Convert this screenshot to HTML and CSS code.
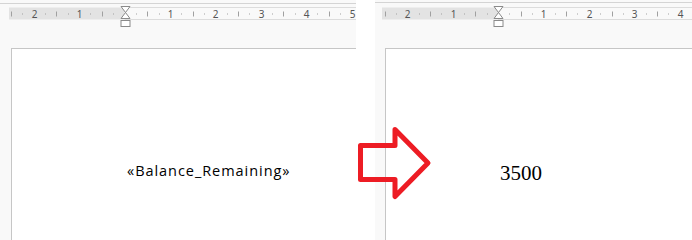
FILE: index.html
```html
<!DOCTYPE html>
<html lang="en">
<head>
  <meta charset="UTF-8">
  <title>Mail merge field</title>
  <link rel="stylesheet" href="styles.css">
</head>
<body>
  <div class="screen">
    <div class="panel panel-left">
      <svg class="ruler" id="rulerLeft" width="356" height="48" data-origin="124.5" data-top="3.5" data-band="9"></svg>
      <div class="page page-left">
        <p class="field">«Balance_Remaining»</p>
      </div>
    </div>

    <div class="gap"></div>

    <div class="panel panel-right">
      <svg class="ruler" id="rulerRight" width="317" height="48" data-origin="123" data-top="2.5" data-band="7"></svg>
      <div class="page page-right">
        <p class="value">3500</p>
      </div>
    </div>

    <svg class="arrow" width="80" height="80" viewBox="355 124 80 80">
      <polygon points="360.5,145.5 395,145.5 395,129.5 428,163 395,196.5 395,179.5 360.5,179.5" />
    </svg>
  </div>

  <script>
    // rulers: one unit = 45.4px, ticks every quarter
    const NS = 'http://www.w3.org/2000/svg';
    const UNIT = 45.4;

    function el(name, attrs, text) {
      const node = document.createElementNS(NS, name);
      for (const k in attrs) node.setAttribute(k, attrs[k]);
      if (text) node.textContent = text;
      return node;
    }

    function drawRuler(svg) {
      const w = +svg.getAttribute('width');
      const origin = +svg.dataset.origin;
      const top = +svg.dataset.top;
      const band = +svg.dataset.band;

      svg.appendChild(el('line', { x1: 0, y1: top, x2: w, y2: top, class: 'rule-top' }));
      svg.appendChild(el('rect', { x: band, y: 7.5, width: origin - band, height: 12, class: 'band' }));
      svg.appendChild(el('line', { x1: origin, y1: 7.5, x2: w, y2: 7.5, class: 'band-edge' }));
      svg.appendChild(el('line', { x1: origin, y1: 19.5, x2: w, y2: 19.5, class: 'band-edge' }));

      for (let k = -12; k <= 24; k++) {
        const x = Math.round(origin + k * UNIT / 4) + 0.5;
        if (x < band + 1 || x > w - 2) continue;
        if (k === 0) continue;
        if (k % 4 === 0) {
          svg.appendChild(el('text', { x: x, y: 18, class: 'num' }, String(Math.abs(k / 4))));
        } else if (k % 2 === 0) {
          svg.appendChild(el('line', { x1: x, y1: 11.5, x2: x, y2: 16.5, class: 'tick' }));
        } else {
          svg.appendChild(el('line', { x1: x, y1: 13.5, x2: x, y2: 14.5, class: 'tick' }));
        }
      }

      // hanging indent marker
      const o = Math.round(origin) + 0.5;
      svg.appendChild(el('polygon', {
        points: `${o - 4.5},6.5 ${o + 4.5},6.5 ${o},12.5 ${o + 4.5},18.5 ${o - 4.5},18.5 ${o},12.5`,
        class: 'marker'
      }));
      svg.appendChild(el('rect', { x: o - 4.5, y: 20.5, width: 9, height: 6, class: 'marker' }));
    }

    drawRuler(document.getElementById('rulerLeft'));
    drawRuler(document.getElementById('rulerRight'));
  </script>
</body>
</html>
```

FILE: styles.css
```css
html, body {
  margin: 0;
  padding: 0;
  background-color: #fff;
}
.screen {
  position: relative;
  display: flex;
  width: 692px;
  height: 240px;
  overflow: hidden;
}
.panel {
  display: flex;
  flex-direction: column;
  background-color: #f9f9f9;
}
.panel-left {
  width: 356px;
}
.gap {
  width: 19px;
  background-color: #fff;
}
.panel-right {
  flex: 1;
}
.ruler {
  display: block;
}
.rule-top {
  stroke: #d4d4d4;
  stroke-width: 1;
}
.band {
  fill: #e3e3e3;
}
.band-edge {
  stroke: #dcdcdc;
  stroke-width: 1;
}
.tick {
  stroke: #a0a0a0;
  stroke-width: 1;
}
.num {
  font-family: "Noto Sans", sans-serif;
  font-size: 10px;
  fill: #555;
  text-anchor: middle;
}
.marker {
  fill: #fff;
  stroke: #8a8a8a;
  stroke-width: 1;
}
.page {
  flex: 1;
  background-color: #fff;
  border-top: 1px solid #c6c6c6;
  border-left: 1px solid #c6c6c6;
}
.page-left {
  margin-left: 11px;
}
.page-right {
  margin-left: 10px;
}
.field {
  margin: 113px 0 0 115px;
  font-family: "Open Sans", sans-serif;
  font-size: 14.5px;
  letter-spacing: 0.95px;
  line-height: 18px;
  color: #000;
  white-space: nowrap;
}
.value {
  margin: 112px 0 0 114px;
  font-family: "Liberation Serif", serif;
  font-size: 21px;
  line-height: 24px;
  color: #000;
}
.arrow {
  position: absolute;
  left: 355px;
  top: 124px;
}
.arrow polygon {
  fill: none;
  stroke: #ed1c24;
  stroke-width: 5;
  stroke-linejoin: round;
}
```
